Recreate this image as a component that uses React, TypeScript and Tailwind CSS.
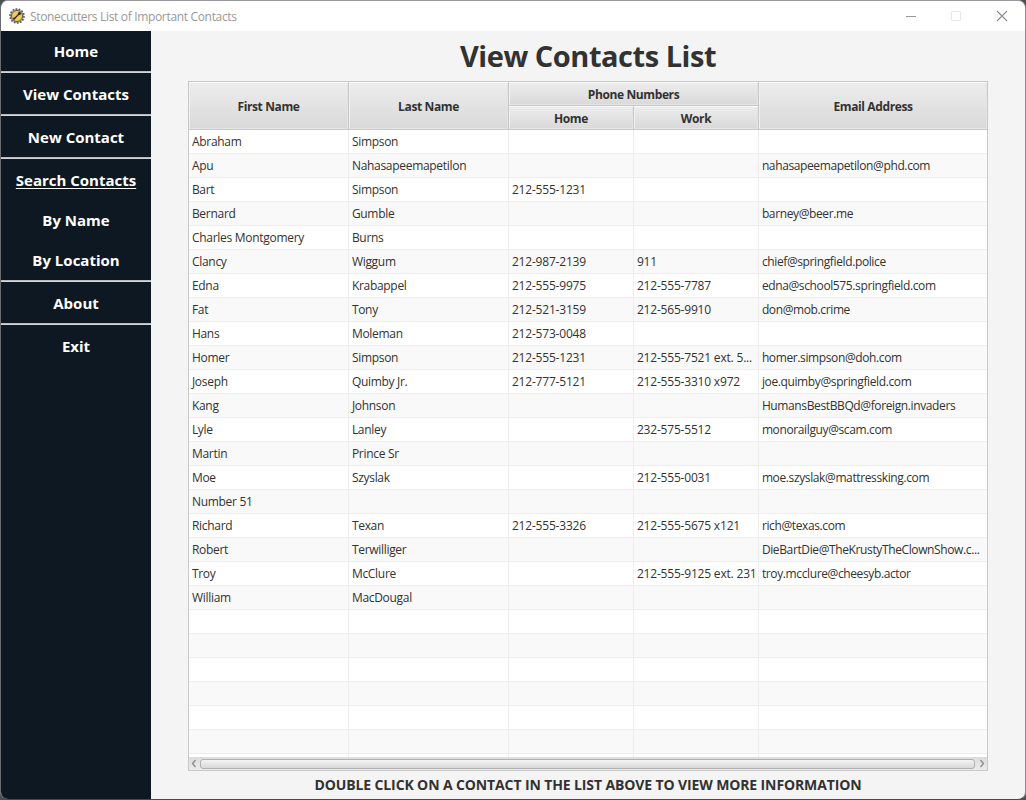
import type { ReactNode } from "react";

type Contact = [string, string, string, string, string];

const contacts: Contact[] = [
  ["Abraham", "Simpson", "", "", ""],
  ["Apu", "Nahasapeemapetilon", "", "", "nahasapeemapetilon@phd.com"],
  ["Bart", "Simpson", "212-555-1231", "", ""],
  ["Bernard", "Gumble", "", "", "barney@beer.me"],
  ["Charles Montgomery", "Burns", "", "", ""],
  ["Clancy", "Wiggum", "212-987-2139", "911", "chief@springfield.police"],
  ["Edna", "Krabappel", "212-555-9975", "212-555-7787", "edna@school575.springfield.com"],
  ["Fat", "Tony", "212-521-3159", "212-565-9910", "don@mob.crime"],
  ["Hans", "Moleman", "212-573-0048", "", ""],
  ["Homer", "Simpson", "212-555-1231", "212-555-7521 ext. 5...", "homer.simpson@doh.com"],
  ["Joseph", "Quimby Jr.", "212-777-5121", "212-555-3310 x972", "joe.quimby@springfield.com"],
  ["Kang", "Johnson", "", "", "HumansBestBBQd@foreign.invaders"],
  ["Lyle", "Lanley", "", "232-575-5512", "monorailguy@scam.com"],
  ["Martin", "Prince Sr", "", "", ""],
  ["Moe", "Szyslak", "", "212-555-0031", "moe.szyslak@mattressking.com"],
  ["Number 51", "", "", "", ""],
  ["Richard", "Texan", "212-555-3326", "212-555-5675 x121", "rich@texas.com"],
  ["Robert", "Terwilliger", "", "", "DieBartDie@TheKrustyTheClownShow.c..."],
  ["Troy", "McClure", "", "212-555-9125 ext. 231", "troy.mcclure@cheesyb.actor"],
  ["William", "MacDougal", "", "", ""],
];

const blank: Contact = ["", "", "", "", ""];
const rows: Contact[] = [...contacts, ...Array.from({ length: 6 }, () => blank)];

const columnTracking = [
  "tracking-[-0.28px]",
  "tracking-[-0.3px]",
  "tracking-[-0.19px]",
  "tracking-[-0.19px]",
  "tracking-[-0.38px]",
];

function HeaderCell({ children, className = "" }: { children: ReactNode; className?: string }) {
  return (
    <div
      className={`flex items-center justify-center border-r border-b border-[#c8c8c8] bg-linear-to-b from-[#ededed] to-[#d9d9d9] pt-[2px] pl-px text-[12px] font-bold tracking-[-0.38px] shadow-[inset_0_1px_0_#fafafa,inset_1px_0_0_#f0f0f0,inset_-1px_-1px_0_#e4e4e4] ${className}`}
    >
      {children}
    </div>
  );
}

function NavItem({ children, className = "h-[41px] pt-[2px]" }: { children: ReactNode; className?: string }) {
  return <a className={`flex items-center justify-center ${className}`}>{children}</a>;
}

function Separator() {
  return <div className="h-0.5 shrink-0 border-t border-[#b9bbc0] bg-[#d4d4d6]" />;
}

function AppIcon() {
  return (
    <svg width="16" height="16" viewBox="0 0 16 16" className="shrink-0">
      <circle cx="8" cy="8" r="7" fill="#b5b5b5" stroke="#55555a" strokeWidth="1.6" strokeDasharray="1.6 1.54" />
      <circle cx="8" cy="8" r="5.5" fill="#f2cb5a" stroke="#55503f" strokeWidth="0.9" />
      <path d="M5 11L11 5" stroke="#2a2414" strokeWidth="1.3" />
      <circle cx="5.2" cy="10.6" r="1.1" fill="#2a2414" />
      <circle cx="10.4" cy="5.6" r="1.5" fill="#2a2414" />
    </svg>
  );
}

export default function App() {
  return (
    <div className="h-[800px] w-[1026px] overflow-hidden bg-[#4a4f51] font-['Open_Sans','Noto_Sans',sans-serif] text-[#323232]">
      <div className="flex h-[800px] flex-col overflow-hidden rounded-lg border border-t-[#9a9aa0] border-r-[#8b8c90] border-b-[#46484a] border-l-[#6a6c70] bg-[#f4f4f4]">
        <header className="flex h-[30px] shrink-0 items-center bg-white pl-2">
          <AppIcon />
          <span className="ml-[5px] pt-px text-[12px] tracking-[-0.33px] text-[#999]">
            Stonecutters List of Important Contacts
          </span>
          <svg width="106" height="12" viewBox="0 0 106 12" fill="none" className="mr-[15px] ml-auto">
            <path d="M2 6.5H12" stroke="#999" />
            <rect x="47.5" y="1.5" width="9" height="9" rx="0.5" stroke="#e8e8e8" />
            <path d="M93 1L103 11M103 1L93 11" stroke="#8c8c8c" strokeWidth="1.1" />
          </svg>
        </header>
        <div className="flex min-h-0 flex-1">
          <nav className="flex w-[150px] shrink-0 flex-col bg-[#0e1822] text-[15px] font-bold text-white">
            <NavItem className="h-10">Home</NavItem>
            <Separator />
            <NavItem>View Contacts</NavItem>
            <Separator />
            <NavItem>New Contact</NavItem>
            <Separator />
            <NavItem className="h-[41px] pt-[2px] underline underline-offset-2">Search Contacts</NavItem>
            <NavItem className="h-10">By Name</NavItem>
            <NavItem className="h-10">By Location</NavItem>
            <Separator />
            <NavItem>About</NavItem>
            <Separator />
            <NavItem>Exit</NavItem>
          </nav>
          <main className="flex flex-1 flex-col items-center pr-px">
            <h1 className="flex h-[50px] items-center pb-[2px] pl-px text-[29px] leading-none font-bold tracking-[-0.47px]">
              View Contacts List
            </h1>
            <section className="flex h-[690px] w-[800px] shrink-0 flex-col border border-[#c8c8c8] bg-white">
              <div className="grid h-12 shrink-0 grid-cols-[160px_160px_125px_125px_228px] grid-rows-2">
                <HeaderCell className="row-span-2">First Name</HeaderCell>
                <HeaderCell className="row-span-2">Last Name</HeaderCell>
                <HeaderCell className="col-span-2">Phone Numbers</HeaderCell>
                <HeaderCell className="row-span-2 border-r-0">Email Address</HeaderCell>
                <HeaderCell>Home</HeaderCell>
                <HeaderCell>Work</HeaderCell>
              </div>
              <div className="h-[627px] shrink-0 overflow-hidden">
                {rows.map((row, i) => (
                  <div
                    key={i}
                    className="grid h-6 grid-cols-[160px_160px_125px_125px_228px] border-b border-[#ededed] odd:bg-white even:bg-[#f9f9f9]"
                  >
                    {row.map((value, j) => (
                      <div
                        key={j}
                        className={`border-r border-[#ededed] pl-[3.4px] text-[12px] leading-[24px] whitespace-nowrap last:border-r-0 ${columnTracking[j]}`}
                      >
                        {value}
                      </div>
                    ))}
                  </div>
                ))}
                <div className="grid h-[3px] grid-cols-[160px_160px_125px_125px_228px]">
                  {blank.map((_, j) => (
                    <div key={j} className="border-r border-[#ededed] last:border-r-0" />
                  ))}
                </div>
              </div>
              <div className="flex flex-1 items-center justify-between bg-linear-to-b from-[#dcdcdc] to-[#ececec] px-[2px]">
                <svg width="6" height="9" viewBox="0 0 6 9" fill="none" stroke="#8a8a8a" strokeWidth="1.3">
                  <path d="M4.5 1L1.5 4.5L4.5 8" />
                </svg>
                <div className="h-[10px] w-[775px] rounded-[3px] border border-[#b0b0b0] bg-linear-to-b from-[#f4f4f4] to-[#d8d8d8]" />
                <svg width="6" height="9" viewBox="0 0 6 9" fill="none" stroke="#8a8a8a" strokeWidth="1.3">
                  <path d="M1.5 1L4.5 4.5L1.5 8" />
                </svg>
              </div>
            </section>
            <p className="flex flex-1 items-center pl-px text-[14px] leading-none font-bold tracking-[-0.12px]">
              DOUBLE CLICK ON A CONTACT IN THE LIST ABOVE TO VIEW MORE INFORMATION
            </p>
          </main>
        </div>
      </div>
    </div>
  );
}
